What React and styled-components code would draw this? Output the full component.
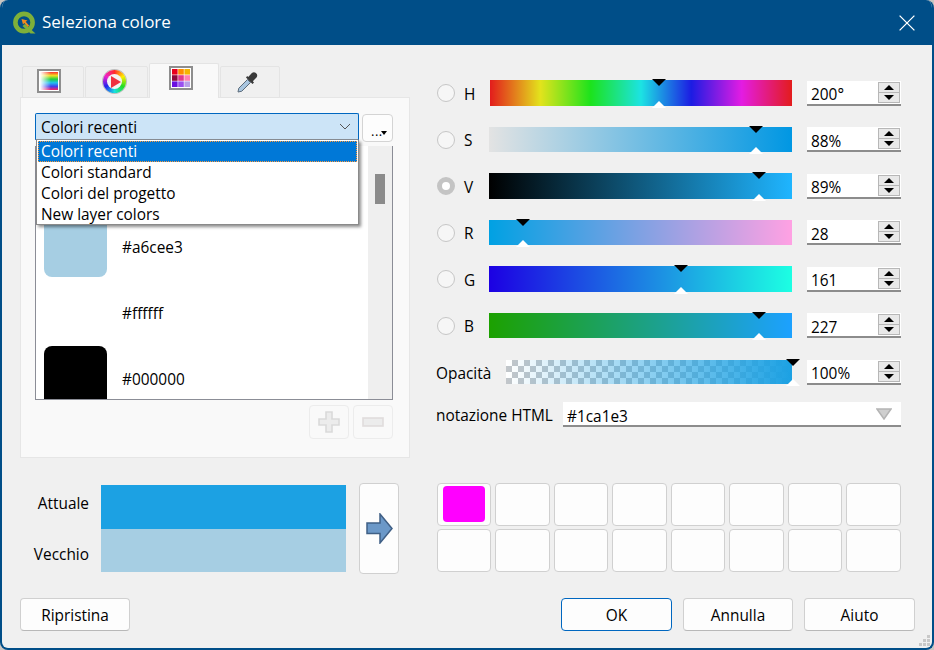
import React from "react";
import styled, { createGlobalStyle } from "styled-components";

const Global = createGlobalStyle`
  html, body { margin: 0; padding: 0; background: #c9c6c2; }
  body { font-family: "Open Sans", "Noto Sans", "Liberation Sans", sans-serif; font-size: 15.4px; color: #000; }
  * { box-sizing: border-box; }
`;

const Window = styled.div`
  position: relative; width: 934px; height: 650px; background: #f0f0f0;
  border: 2px solid #004e88; border-top: 0; border-radius: 8px 8px 8px 8px;
  overflow: hidden; display: flex; flex-direction: column;
`;
const TitleBar = styled.header`
  height: 45px; flex: none; margin: 0 -2px; background: #004e88; color: #fff;
  display: flex; align-items: center; padding: 0 19px 0 13px; gap: 5px; font-size: 17px;
`;
const TitleText = styled.span`flex: 1; position: relative; top: -1px;`;
const CloseIcon = styled.svg`width: 16px; height: 16px;`;

const Main = styled.main`
  flex: 1; padding: 18px 17px 0 18px; display: flex; flex-direction: column;
`;
const TopRow = styled.div`display: flex; height: 395px;`;
const LeftColumn = styled.section`width: 390px; flex: none; display: flex; flex-direction: column;`;
const Tabs = styled.div`display: flex; align-items: flex-end; padding-left: 2px; height: 35px; margin-bottom: -1px; position: relative; z-index: 1;`;
const Tab = styled.div`
  width: ${p => p.$w}px; height: ${p => (p.$active ? 35 : 32)}px; margin-right: 1px;
  background: ${p => (p.$active ? "#f9f9f9" : "#f0f0f0")};
  border: 1px solid #e4e4e4; border-bottom: ${p => (p.$active ? "0" : "1px solid #e4e4e4")};
  border-radius: 2px 2px 0 0;
  display: flex; justify-content: flex-start; align-items: flex-start;
  padding: ${p => p.$top}px 0 0 ${p => p.$left}px;
`;
const Wheel = styled.div`
  width: 23px; height: 23px; border-radius: 50%; flex: none;
  background: conic-gradient(#ff2b2b, #ffee00, #22dd22, #18e0e0, #2222ee, #ee22cc, #ff2b2b);
  box-shadow: 0 0 0 1px #bdbdbd;
  display: flex; align-items: center; justify-content: center;
`;
const WheelCore = styled.div`
  width: 15px; height: 15px; border-radius: 50%; background: #f4f4f4;
  display: flex; align-items: center; justify-content: center;
`;
const Panel = styled.div`
  flex: 1; background: #f9f9f9; border: 1px solid #e6e6e6; padding: 15px 16px 0 14px;
  display: flex; flex-direction: column;
`;
const ComboRow = styled.div`display: flex; gap: 3px; height: 33px; position: relative; z-index: 2;`;
const ComboWrap = styled.div`position: relative; width: 324px; height: 27px;`;
const Combo = styled.div`
  height: 27px; background: #cce4f7; border: 1px solid #0067c0; border-bottom-color: #8a8f96; border-radius: 2px 2px 0 0;
  display: flex; align-items: center; justify-content: space-between; padding: 0 7px 0 5px;
`;
const ComboText = styled.span`position: relative; top: 1px;`;
const Popup = styled.ul`
  position: absolute; left: 1px; top: 27px; width: 323px; height: 85px; margin: 0; padding: 1px 1px 0 1px;
  list-style: none; background: #fff; border: 1px solid #8a8a8a; border-top: 0;
  box-shadow: 2px 2px 3px rgba(0,0,0,.45);
`;
const PopupItem = styled.li`
  height: 21px; line-height: 22px; padding-left: 3px;
  ${p => p.$active ? `background: #0078d7; color: #fff; outline: 1px dotted #ff9a3c; outline-offset: -1px;` : ""}
`;
const MoreButton = styled.div`
  width: 31px; height: 28px; margin-top: 1px; background: #fdfdfd; border: 1px solid #d4d4d4; border-radius: 4px;
  position: relative; font-size: 13px; line-height: 1; padding: 10px 0 0 8px; letter-spacing: .5px;
`;
const MoreCaret = styled.span`
  position: absolute; right: 5px; bottom: 6px; width: 0; height: 0;
  border: 3.5px solid transparent; border-top: 4px solid #000; border-bottom: 0;
`;
const ListBox = styled.div`
  width: 358px; height: 254px; border: 1px solid #8b8d96; border-top: 0; background: #fff;
  display: flex; overflow: hidden;
`;
const ListRows = styled.div`flex: 1; padding: 68px 0 0 8px;`;
const ListRow = styled.div`display: flex; align-items: center; height: 66px; gap: 15px;`;
const ColorName = styled.span``;
const Swatch = styled.div`
  width: 63px; height: 63px; margin-bottom: 3px; border-radius: 8px;
  background: ${p => p.$c};
`;
const Scrollbar = styled.div`width: 24px; flex: none; background: #efefef; padding: 28px 0 0 7px;`;
const ScrollThumb = styled.div`width: 10px; height: 30px; background: #8b8b8b;`;
const ListActions = styled.div`display: flex; justify-content: flex-end; gap: 4px; margin-top: 5px; width: 358px;`;
const SmallButton = styled.div`
  width: 40px; height: 34px; border: 1px solid #ececec; border-radius: 4px; background: #f9f9f9;
  display: flex; align-items: center; justify-content: center;
`;

const RightColumn = styled.section`
  margin-left: 26px; width: 465px; padding-top: 6.75px; display: flex; flex-direction: column;
`;
const SliderRow = styled.div`display: flex; align-items: center; height: 46.5px;`;
const Radio = styled.div`
  width: 18px; height: 18px; margin-left: 1px; border-radius: 50%; flex: none;
  border: ${p => (p.$on ? "5px solid #c4c4c4" : "1px solid #c6c6c6")};
  background: ${p => (p.$on ? "#fff" : "#f6f6f6")};
`;
const ChannelLabel = styled.span`width: ${p => p.$w}px; padding: 2px 0 0 9px; flex: none;`;
const OpacityLabel = styled.span`width: 70px; flex: none; padding-top: 2px;`;
const Track = styled.div`
  position: relative; width: ${p => p.$w}px; height: ${p => p.$h}px; flex: none;
  background: ${p => p.$bg};
`;
const ThumbTop = styled.span`
  position: absolute; top: -1px; left: ${p => p.$pos}%; margin-left: -6.5px; width: 0; height: 0;
  border-left: 7px solid transparent; border-right: 7px solid transparent; border-top: 7px solid #000;
`;
const ThumbBottom = styled.span`
  position: absolute; bottom: -2px; left: ${p => p.$pos}%; margin-left: -6.5px; width: 0; height: 0;
  border-left: 7px solid transparent; border-right: 7px solid transparent; border-bottom: 7px solid #fff;
`;
const Spin = styled.div`
  margin-left: 15px; width: 94px; height: 25px; flex: none; background: #fff;
  border-bottom: 2px solid #8c8c8c; display: flex; align-items: center; justify-content: space-between;
  padding: 0 1px 0 4px;
`;
const SpinValue = styled.span`position: relative; top: 2.5px;`;
const SpinArrows = styled.div`display: flex; flex-direction: column; width: 22px; flex: none; background: #e9e9e9; border: 1px solid #b7b7b7; height: 21px;`;
const SpinArrow = styled.div`
  flex: 1; display: flex; align-items: center; justify-content: center;
  & + & { border-top: 1px solid #b7b7b7; }
`;
const TriUp = styled.span`width: 0; height: 0; border-left: 5px solid transparent; border-right: 5px solid transparent; border-bottom: 5px solid #000;`;
const TriDown = styled.span`width: 0; height: 0; border-left: 5px solid transparent; border-right: 5px solid transparent; border-top: 5px solid #000;`;
const HtmlRow = styled.div`display: flex; align-items: center; margin-top: 7px; height: 25px;`;
const HtmlLabel = styled.span`width: 127px; flex: none; padding-top: 2px;`;
const HtmlInput = styled.div`
  width: 338px; height: 25px; background: #fff; border-bottom: 2px solid #8c8c8c;
  display: flex; align-items: center; justify-content: space-between; padding: 0 9px 0 4px;
`;
const HtmlValue = styled.span`position: relative; top: 2.5px;`;
const HtmlCaret = styled.svg`width: 16px; height: 12px;`;

const BottomRow = styled.div`display: flex; margin-top: 25px; height: 91px;`;
const ColorLabels = styled.div`
  width: 69px; flex: none; display: flex; flex-direction: column; text-align: right; justify-content: space-between; padding: 10px 0 9px;
`;
const ColorPreview = styled.div`width: 245px; margin: 2px 0 0 12px; height: 87px; display: flex; flex-direction: column; flex: none;`;
const PreviewBlock = styled.div`flex: 1; background: ${p => p.$c};`;
const ArrowButton = styled.div`
  width: 40px; height: 91px; margin-left: 13px; flex: none; background: #fdfdfd; border: 1px solid #d0d0d0; border-radius: 4px;
  display: flex; align-items: center; justify-content: center;
`;
const PaletteGrid = styled.div`
  margin-left: 37.750px; width: 464px; display: grid; grid-template-columns: repeat(8, 1fr); grid-template-rows: 43px 43px; gap: 3px 4px; flex: none;
`;
const PaletteCell = styled.div`
  background: #fdfdfd; border: 1px solid #d0d0d0; border-radius: 4px; padding: 2px 5px 3px;
`;
const PaletteFill = styled.div`width: 100%; height: 100%; border-radius: 4px; background: #ff00ff;`;
const ButtonRow = styled.div`display: flex; margin-top: 24px; justify-content: space-between;`;
const ButtonGroup = styled.div`display: flex; gap: 11px;`;
const DialogButton = styled.div`
  width: ${p => p.$w}px; height: 33px; background: #fdfdfd; border: 1px solid ${p => (p.$primary ? "#0067c0" : "#d0d0d0")};
  border-bottom-color: ${p => (p.$primary ? "#0067c0" : "#b8b8b8")}; border-radius: 4px;
  display: flex; align-items: center; justify-content: center; padding-top: 1px;
`;
const Grip = styled.svg`position: absolute; right: 0; bottom: 0; width: 14px; height: 14px;`;

const Logo = () => (
  <svg width="24" height="24" viewBox="0 0 24 24" style={{ flex: "none" }}>
    <circle cx="11" cy="11.5" r="8.6" fill="none" stroke="#7eb03a" strokeWidth="4.6" />
    <path d="M12 13l10.500 9.500h-5l-8-7.500z" fill="#7eb03a" />
    <path d="M8.500 8l6 1.500-1.800 1.200 3.500 4-1.400 1.200-3.500-4L10 13.500z" fill="#f08a1d" />
  </svg>
);
const GradientIcon = () => (
  <svg width="24" height="24" viewBox="0 0 24 24" style={{ display: "block" }}>
    <defs>
      <linearGradient id="hue" x1="0" y1="0" x2="0" y2="1">
        <stop offset="0" stopColor="#ff3030" /><stop offset=".2" stopColor="#f0e020" />
        <stop offset=".4" stopColor="#20d040" /><stop offset=".6" stopColor="#20c0f0" />
        <stop offset=".8" stopColor="#4040f0" /><stop offset="1" stopColor="#ff2060" />
      </linearGradient>
      <linearGradient id="fade" x1="0" y1="0" x2="1" y2="0">
        <stop offset="0" stopColor="#fff" /><stop offset=".6" stopColor="#fff" stopOpacity="0" />
      </linearGradient>
    </defs>
    <rect x="1" y="1" width="22" height="22" fill="#fff" stroke="#8e8e8e" strokeWidth="2" />
    <rect x="3" y="3" width="18" height="18" fill="url(#hue)" />
    <rect x="3" y="3" width="18" height="18" fill="url(#fade)" />
  </svg>
);
const SwatchIcon = () => {
  const c = ["#e8001c", "#ff8c00", "#f5b400", "#8f0a3c", "#e0398c", "#ff7fb0", "#6a10e0", "#9a50f0", "#b8a0e8"];
  return (
    <svg width="24" height="24" viewBox="0 0 24 24" style={{ display: "block" }}>
      <rect x="1" y="1" width="22" height="22" fill="#fff" stroke="#8e8e8e" strokeWidth="2" />
      {c.map((f, i) => <rect key={f} x={3 + (i % 3) * 6.2} y={3 + Math.floor(i / 3) * 6.2} width="5.600" height="5.600" fill={f} />)}
    </svg>
  );
};
const DropperIcon = () => (
  <svg width="22" height="23" viewBox="0 0 22 23" style={{ display: "block" }}>
    <path d="M1 22l.8-3.800L10.500 9.500l3 3-8.700 8.700z" fill="#a9c6e0" stroke="#5b6b7a" strokeWidth="1" />
    <path d="M9 7.500l6.500 6.500 1.500-1.500-1.200-1.200 3.700-3.700a3.300 3.300 0 0 0-4.600-4.600L11.200 7l-1-1z" fill="#3a3a3a" />
  </svg>
);
const PlusIcon = () => (
  <svg width="22" height="22" viewBox="0 0 22 22">
    <path d="M8 1h6v7h7v6h-7v7H8v-7H1V8h7z" fill="#ececec" stroke="#dadada" strokeWidth="1.600" />
  </svg>
);
const MinusIcon = () => (
  <svg width="22" height="10" viewBox="0 0 22 10">
    <rect x="1" y="1" width="20" height="8" fill="#ececec" stroke="#e0dcdc" strokeWidth="1.600" />
  </svg>
);
const ArrowIcon = () => (
  <svg width="27" height="31" viewBox="0 0 27 31">
    <path d="M1 10h13V1l12 14.500L14 30v-9.500H1z" fill="#6b98c8" stroke="#3f5f85" strokeWidth="1.500" />
  </svg>
);

const channels = [
  { k: "H", v: "200°", pos: 200 / 359 * 100, w: 302, lw: 35, bg: "linear-gradient(90deg,#e31c1c,#e3e31c,#1ce31c,#1ce3e3,#1c1ce3,#e31ce3,#e31c1c)" },
  { k: "S", v: "88%", pos: 88, w: 303, lw: 34, bg: "linear-gradient(90deg,#e3e3e3,#0097e3)" },
  { k: "V", v: "89%", pos: 89, w: 303, lw: 34, on: true, bg: "linear-gradient(90deg,#000,#1fb5ff)" },
  { k: "R", v: "28", pos: 28 / 255 * 100, w: 303, lw: 34, bg: "linear-gradient(90deg,#00a1e3,#ffa1e3)" },
  { k: "G", v: "161", pos: 161 / 255 * 100, w: 303, lw: 34, bg: "linear-gradient(90deg,#1c00e3,#1cffe3)" },
  { k: "B", v: "227", pos: 227 / 255 * 100, w: 303, lw: 34, bg: "linear-gradient(90deg,#1ca100,#1ca1ff)" },
];
const checks = "linear-gradient(90deg,rgba(28,161,227,0),#1ca1e3),repeating-conic-gradient(#c2c6ca 0 25%,#fff 0 50%) 0 0/12px 12px";

const SpinBox = ({ value }) => (
  <Spin>
    <SpinValue>{value}</SpinValue>
    <SpinArrows>
      <SpinArrow><TriUp /></SpinArrow>
      <SpinArrow><TriDown /></SpinArrow>
    </SpinArrows>
  </Spin>
);

export default function App() {
  return (
    <>
      <Global />
      <Window>
        <TitleBar>
          <Logo />
          <TitleText>Seleziona colore</TitleText>
          <CloseIcon viewBox="0 0 16 16"><path d="M.6.600l14.800 14.800M15.400.600L.6 15.400" stroke="#fff" strokeWidth="1.300" /></CloseIcon>
        </TitleBar>
        <Main>
          <TopRow>
            <LeftColumn>
              <Tabs>
                <Tab $w={62} $top={2} $left={14}><GradientIcon /></Tab>
                <Tab $w={63} $top={3} $left={17}><Wheel><WheelCore><svg width="12" height="12" viewBox="0 0 12 12"><path d="M2 0l10 6-10 6z" fill="#f03040" /></svg></WheelCore></Wheel></Tab>
                <Tab $w={70} $active $top={2} $left={19}><SwatchIcon /></Tab>
                <Tab $w={60} $top={3} $left={16}><DropperIcon /></Tab>
              </Tabs>
              <Panel>
                <ComboRow>
                  <ComboWrap>
                    <Combo>
                      <ComboText>Colori recenti</ComboText>
                      <svg width="12" height="7" viewBox="0 0 12 7"><path d="M1 1l5 5 5-5" fill="none" stroke="#555" strokeWidth="1" /></svg>
                    </Combo>
                    <Popup>
                      <PopupItem $active>Colori recenti</PopupItem>
                      <PopupItem>Colori standard</PopupItem>
                      <PopupItem>Colori del progetto</PopupItem>
                      <PopupItem>New layer colors</PopupItem>
                    </Popup>
                  </ComboWrap>
                  <MoreButton>...<MoreCaret /></MoreButton>
                </ComboRow>
                <ListBox>
                  <ListRows>
                    <ListRow><Swatch $c="#a6cee3" /><ColorName>#a6cee3</ColorName></ListRow>
                    <ListRow><Swatch $c="#ffffff" /><ColorName>#ffffff</ColorName></ListRow>
                    <ListRow><Swatch $c="#000000" /><ColorName>#000000</ColorName></ListRow>
                  </ListRows>
                  <Scrollbar><ScrollThumb /></Scrollbar>
                </ListBox>
                <ListActions>
                  <SmallButton><PlusIcon /></SmallButton>
                  <SmallButton><MinusIcon /></SmallButton>
                </ListActions>
              </Panel>
            </LeftColumn>
            <RightColumn>
              {channels.map(c => (
                <SliderRow key={c.k}>
                  <Radio $on={c.on} />
                  <ChannelLabel $w={c.lw}>{c.k}</ChannelLabel>
                  <Track $w={c.w} $h={25.5} $bg={c.bg}>
                    <ThumbTop $pos={c.pos} />
                    <ThumbBottom $pos={c.pos} />
                  </Track>
                  <SpinBox value={c.v} />
                </SliderRow>
              ))}
              <SliderRow>
                <OpacityLabel>Opacità</OpacityLabel>
                <Track $w={286} $h={24} $bg={checks}>
                  <ThumbTop $pos={100} />
                  <ThumbBottom $pos={100} />
                </Track>
                <SpinBox value="100%" />
              </SliderRow>
              <HtmlRow>
                <HtmlLabel>notazione HTML</HtmlLabel>
                <HtmlInput>
                  <HtmlValue>#1ca1e3</HtmlValue>
                  <HtmlCaret viewBox="0 0 16 12"><path d="M1 1h14L8 11z" fill="#cfcfcf" stroke="#b4b4b4" strokeWidth="1.500" /></HtmlCaret>
                </HtmlInput>
              </HtmlRow>
            </RightColumn>
          </TopRow>
          <BottomRow>
            <ColorLabels>
              <span>Attuale</span>
              <span>Vecchio</span>
            </ColorLabels>
            <ColorPreview>
              <PreviewBlock $c="#1ca1e3" />
              <PreviewBlock $c="#a6cee3" />
            </ColorPreview>
            <ArrowButton><ArrowIcon /></ArrowButton>
            <PaletteGrid>
              <PaletteCell><PaletteFill /></PaletteCell>
              {Array.from({ length: 15 }, (_, i) => <PaletteCell key={i} />)}
            </PaletteGrid>
          </BottomRow>
          <ButtonRow>
            <DialogButton $w={110}>Ripristina</DialogButton>
            <ButtonGroup>
              <DialogButton $w={111} $primary>OK</DialogButton>
              <DialogButton $w={110}>Annulla</DialogButton>
              <DialogButton $w={111}>Aiuto</DialogButton>
            </ButtonGroup>
          </ButtonRow>
        </Main>
        <Grip viewBox="0 0 14 14">
          <path d="M9 1h3v3H9zM5 5h3v3H5zM9 5h3v3H9zM1 9h3v3H1zM5 9h3v3H5zM9 9h3v3H9z" fill="#c8c8c8" />
        </Grip>
      </Window>
    </>
  );
}
